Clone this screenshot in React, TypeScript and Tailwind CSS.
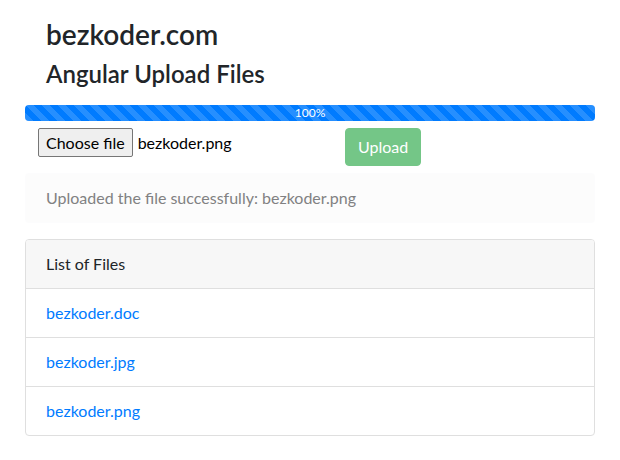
import React from "react";

export default function App() {
  const files = ["bezkoder.doc", "bezkoder.jpg", "bezkoder.png"];
  return (
    <div
      className="w-[620px] h-[460px] bg-white px-[25px] pt-[17px] text-[16px] leading-[24px] text-[#212529]"
      style={{ fontFamily: "Lato, 'Noto Sans', sans-serif" }}
    >
      <div className="pl-[21px]">
        <h3 className="text-[28px] leading-[34px] font-semibold mb-[8px]">bezkoder.com</h3>
        <h4 className="text-[24px] leading-[29px] font-semibold">Angular Upload Files</h4>
      </div>

      <div className="mt-[17px] h-[16px] rounded-[4px] overflow-hidden bg-[#e9ecef] flex">
        <div className="w-full h-full bg-[#007bff] bg-[linear-gradient(45deg,rgba(255,255,255,0.15)_25%,transparent_25%,transparent_50%,rgba(255,255,255,0.15)_50%,rgba(255,255,255,0.15)_75%,transparent_75%,transparent)] bg-[length:16px_16px] text-white text-[12px] leading-[16px] text-center">
          100%
        </div>
      </div>

      <div className="flex items-start mt-[7px]">
        <div className="flex items-center ml-[13px] w-[307px]">
          <span className="h-[29px] px-[7px] flex items-center bg-[#efefef] border border-[#767676] rounded-[2px] text-[#000]">
            Choose file
          </span>
          <span className="ml-[5px] text-[#000]">bezkoder.png</span>
        </div>
        <button className="h-[38px] px-[12px] rounded-[4px] bg-[#74c687] text-white border border-[#74c687]">
          Upload
        </button>
      </div>

      <div className="mt-[7px] h-[50px] px-[20px] flex items-center bg-[#fcfcfc] border border-[#fcfcfd] rounded-[4px] text-[#818182]">
        Uploaded the file successfully: bezkoder.png
      </div>

      <div className="mt-[16px] border border-[#dfdfdf] rounded-[4px] overflow-hidden">
        <div className="h-[49px] px-[20px] flex items-center bg-[#f7f7f7] border-b border-[#dfdfdf]">
          List of Files
        </div>
        {files.map((f, i) => (
          <div
            key={f}
            className={
              i < files.length - 1
                ? "h-[49px] px-[20px] flex items-center border-b border-[#dfdfdf]"
                : "h-[48px] px-[20px] flex items-center"
            }
          >
            <a className="text-[#007bff]">{f}</a>
          </div>
        ))}
      </div>
    </div>
  );
}
